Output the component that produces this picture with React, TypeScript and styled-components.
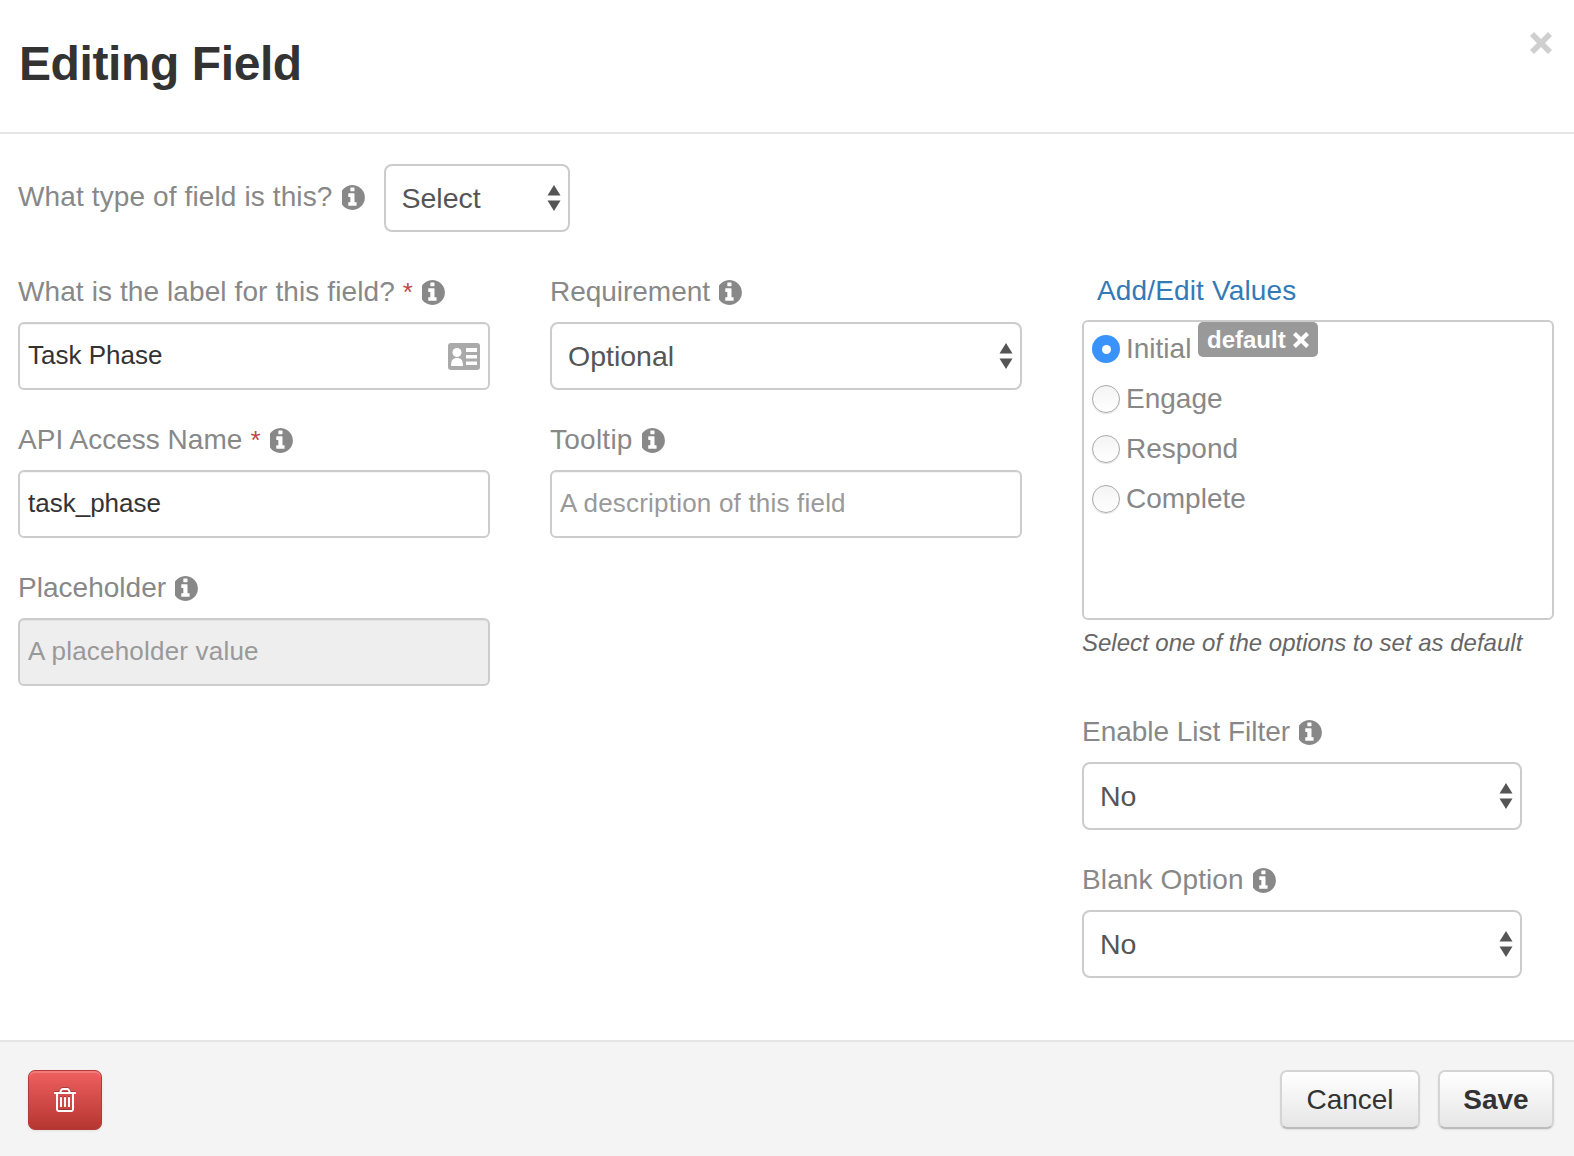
import React from "react";
import styled, { createGlobalStyle } from "styled-components";

const Global = createGlobalStyle`
  html, body { margin: 0; padding: 0; background: #fff; }
  body { font-family: "Liberation Sans", Arial, sans-serif; }
  * { box-sizing: border-box; }
`;

const Modal = styled.div`
  width: 1574px;
  height: 1156px;
  display: flex;
  flex-direction: column;
  background: #fff;
`;
const Header = styled.header`
  height: 134px;
  flex: none;
  display: flex;
  justify-content: space-between;
  padding: 35px 22px 0 19px;
  border-bottom: 2px solid #e5e5e5;
`;
const Title = styled.h1`
  margin: 0;
  font-size: 48px;
  line-height: 58px;
  letter-spacing: -0.4px;
  font-weight: 700;
  color: #333;
`;
const Close = styled.button`
  border: 0;
  background: none;
  padding: 0;
  width: 22px;
  height: 22px;
  margin-top: -3px;
  display: block;
`;
const Body = styled.main`
  flex: 1;
  display: flex;
  flex-direction: column;
  padding: 30px 20px 0 18px;
`;
const TypeRow = styled.div`
  display: flex;
  align-items: center;
  gap: 17px;
  height: 68px;
`;
const Columns = styled.div`
  display: grid;
  grid-template-columns: 472px 472px 472px;
  column-gap: 60px;
  margin-top: 45px;
`;
const Column = styled.div`
  display: flex;
  flex-direction: column;
  gap: 35px;
`;
const Group = styled.div`
  display: flex;
  flex-direction: column;
  gap: 15px;
`;
const Label = styled.label<{ $tracking?: number }>`
  display: flex;
  align-items: center;
  height: 30px;
  font-size: 28px;
  line-height: 30px;
  letter-spacing: ${(p) => p.$tracking ?? -0.03}px;
  color: #888;
  white-space: nowrap;
`;
const TypeLabel = styled(Label)`
  margin-bottom: 2px;
`;
const Required = styled.span`
  color: #b94a48;
  margin-left: 8px;
  font-size: 26px;
`;
const Info = styled.svg`
  width: 25px;
  height: 25px;
  margin-left: 9px;
  fill: #888;
  flex: none;
`;
const InputWrap = styled.div`
  position: relative;
  width: 100%;
`;
const TextInput = styled.input<{ $muted?: boolean }>`
  display: block;
  width: 100%;
  height: 68px;
  padding: 0 8px 2px;
  border: 2px solid #ccc;
  border-radius: 6px;
  font: 26px "Liberation Sans", Arial, sans-serif;
  color: #333;
  background: ${(p) => (p.$muted ? "#eee" : "#fff")};
  box-shadow: inset 0 1px 1px rgba(0, 0, 0, 0.05);
  outline: none;
  &::placeholder { color: #999; opacity: 1; letter-spacing: 0.2px; }
`;
const CardIcon = styled.svg`
  position: absolute;
  right: 10px;
  top: 21px;
  width: 32px;
  height: 27px;
`;
const SelectWrap = styled.div<{ $width?: number }>`
  position: relative;
  width: ${(p) => (p.$width ? `${p.$width}px` : "100%")};
  flex: none;
`;
const NativeSelect = styled.select`
  display: block;
  width: 100%;
  height: 68px;
  padding: 0 16px;
  appearance: none;
  border: 2px solid #ccc;
  border-radius: 8px;
  background: #fff;
  font: 28.5px "Liberation Sans", Arial, sans-serif;
  color: #555;
  outline: none;
`;
const Arrows = styled.svg`
  position: absolute;
  right: 9px;
  top: 20px;
  width: 14px;
  height: 28px;
  fill: #555;
  pointer-events: none;
`;
const ValuesLink = styled.a`
  display: block;
  height: 43px;
  margin-left: 15px;
  font-size: 28px;
  line-height: 28px;
  letter-spacing: 0.15px;
  color: #337ab7;
  text-decoration: none;
`;
const ValuesBox = styled.div`
  height: 300px;
  border: 2px solid #ccc;
  border-radius: 6px;
  padding: 2px 8px 0;
  display: flex;
  flex-direction: column;
  align-items: flex-start;
`;
const ValueRow = styled.div`
  display: flex;
  align-items: center;
  height: 50px;
  gap: 6px;
  font-size: 28px;
  color: #888;
  position: relative;
`;
const Radio = styled.span<{ $on?: boolean }>`
  width: 28px;
  height: 28px;
  border-radius: 50%;
  flex: none;
  display: flex;
  align-items: center;
  justify-content: center;
  background: ${(p) => (p.$on ? "#3a93fb" : "linear-gradient(#f4f4f4, #fff)")};
  border: ${(p) => (p.$on ? "0" : "1px solid #aaa")};
  box-shadow: ${(p) => (p.$on ? "none" : "0 1px 1px rgba(0,0,0,0.12)")};
  &::after {
    content: "";
    display: ${(p) => (p.$on ? "block" : "none")};
    width: 9px;
    height: 9px;
    border-radius: 50%;
    background: #fff;
  }
`;
const DefaultBadge = styled.span`
  position: absolute;
  left: 106px;
  top: -2px;
  height: 35px;
  width: 120px;
  padding: 0 9px;
  display: flex;
  align-items: center;
  gap: 7px;
  border-radius: 5px;
  background: #999;
  color: #fff;
  font-size: 24px;
  font-weight: 700;
`;
const BadgeX = styled.svg`
  width: 16px;
  height: 16px;
  fill: #fff;
  flex: none;
`;
const Hint = styled.p`
  margin: 9px 0 0;
  font-size: 24px;
  line-height: 28px;
  font-style: italic;
  color: #666;
  white-space: nowrap;
`;
const RightGroups = styled.div`
  width: 440px;
  margin-top: 60px;
  display: flex;
  flex-direction: column;
  gap: 35px;
`;
const ValuesBlock = styled.div`
  display: flex;
  flex-direction: column;
`;
const RightColumn = styled.div`
  display: flex;
  flex-direction: column;
`;
const Footer = styled.footer`
  height: 116px;
  flex: none;
  display: flex;
  justify-content: space-between;
  padding: 28px 20px 0 28px;
  background: #f4f4f4;
  border-top: 2px solid #e5e5e5;
`;
const DangerButton = styled.button`
  width: 74px;
  height: 60px;
  padding: 0;
  border: 1px solid #b33a36;
  border-radius: 7px;
  background: linear-gradient(#ef6060, #b53630);
  box-shadow: inset 0 2px 0 rgba(255, 255, 255, 0.18), 0 1px 3px rgba(0, 0, 0, 0.08);
  display: flex;
  align-items: center;
  justify-content: center;
`;
const TrashIcon = styled.svg`
  width: 24px;
  height: 24px;
  fill: #fff;
  filter: drop-shadow(0 -1px 0 rgba(0, 0, 0, 0.25));
`;
const Actions = styled.div`
  display: flex;
  gap: 18px;
`;
const Button = styled.button<{ $width: number; $bold?: boolean }>`
  width: ${(p) => p.$width}px;
  height: 59px;
  padding: 0;
  border: 2px solid #d4d4d4;
  border-bottom-color: #bbb;
  border-radius: 7px;
  background: linear-gradient(#fff, #e6e6e6);
  font: ${(p) => (p.$bold ? 700 : 400)} 28px "Liberation Sans", Arial, sans-serif;
  color: #333;
  box-shadow: 0 1px 2px rgba(0, 0, 0, 0.08);
`;

const InfoIcon = () => (
  <Info viewBox="128 128 1536 1536" aria-hidden="true">
    <path d="M1024 1376v-160q0-14-9-23t-23-9h-96v-512q0-14-9-23t-23-9h-320q-14 0-23 9t-9 23v160q0 14 9 23t23 9h96v320h-96q-14 0-23 9t-9 23v160q0 14 9 23t23 9h448q14 0 23-9t9-23zm-128-896v-160q0-14-9-23t-23-9h-192q-14 0-23 9t-9 23v160q0 14 9 23t23 9h192q14 0 23-9t9-23zm640 416q0 209-103 385.5t-279.5 279.5-385.5 103-385.5-103-279.5-279.5-103-385.5 103-385.5 279.5-279.5 385.5-103 385.5 103 279.5 279.5 103 385.5z" />
  </Info>
);

const Select = ({ value, width }: { value: string; width?: number }) => (
  <SelectWrap $width={width}>
    <NativeSelect defaultValue={value}>
      <option>{value}</option>
    </NativeSelect>
    <Arrows viewBox="0 0 14 28" aria-hidden="true">
      <path d="M7 1l6.5 10.5H.5zM7 27L.5 16.5h13z" />
    </Arrows>
  </SelectWrap>
);

const crossPath = "M4 0l7 7 7-7 4 4-7 7 7 7-4 4-7-7-7 7-4-4 7-7-7-7z";

export default function App() {
  return (
    <Modal>
      <Global />
      <Header>
        <Title>Editing Field</Title>
        <Close aria-label="Close">
          <svg viewBox="0 0 22 22" width="22" height="22" aria-hidden="true">
            <path d={crossPath} fill="#cfcfcf" />
          </svg>
        </Close>
      </Header>
      <Body>
        <TypeRow>
          <TypeLabel $tracking={0.12}>
            What type of field is this?
            <InfoIcon />
          </TypeLabel>
          <Select value="Select" width={186} />
        </TypeRow>
        <Columns>
          <Column>
            <Group>
              <Label $tracking={0.1}>
                What is the label for this field?<Required>*</Required>
                <InfoIcon />
              </Label>
              <InputWrap>
                <TextInput defaultValue="Task Phase" />
                <CardIcon viewBox="0 0 32 27" aria-hidden="true">
                  <rect width="32" height="27" rx="3" fill="#aaa" />
                  <circle cx="9" cy="9.5" r="4.5" fill="#fff" />
                  <path d="M3 23c0-6 2-8 6-8s6 2 6 8z" fill="#fff" />
                  <path d="M18 5h11v4H18zM18 12h11v3.5H18zM18 18.500h11V22H18z" fill="#fff" />
                </CardIcon>
              </InputWrap>
            </Group>
            <Group>
              <Label $tracking={0.02}>
                API Access Name<Required>*</Required>
                <InfoIcon />
              </Label>
              <TextInput defaultValue="task_phase" />
            </Group>
            <Group>
              <Label $tracking={0.02}>
                Placeholder
                <InfoIcon />
              </Label>
              <TextInput $muted placeholder="A placeholder value" />
            </Group>
          </Column>
          <Column>
            <Group>
              <Label>
                Requirement
                <InfoIcon />
              </Label>
              <Select value="Optional" />
            </Group>
            <Group>
              <Label $tracking={0.25}>
                Tooltip
                <InfoIcon />
              </Label>
              <TextInput placeholder="A description of this field" />
            </Group>
          </Column>
          <RightColumn>
            <ValuesBlock>
              <ValuesLink>Add/Edit Values</ValuesLink>
              <ValuesBox>
                <ValueRow>
                  <Radio $on />
                  Initial
                  <DefaultBadge>
                    default
                    <BadgeX viewBox="0 0 22 22" aria-hidden="true">
                      <path d={crossPath} />
                    </BadgeX>
                  </DefaultBadge>
                </ValueRow>
                <ValueRow>
                  <Radio />
                  Engage
                </ValueRow>
                <ValueRow>
                  <Radio />
                  Respond
                </ValueRow>
                <ValueRow>
                  <Radio />
                  Complete
                </ValueRow>
              </ValuesBox>
              <Hint>Select one of the options to set as default</Hint>
            </ValuesBlock>
            <RightGroups>
              <Group>
                <Label>
                  Enable List Filter
                  <InfoIcon />
                </Label>
                <Select value="No" />
              </Group>
              <Group>
                <Label $tracking={0.12}>
                  Blank Option
                  <InfoIcon />
                </Label>
                <Select value="No" />
              </Group>
            </RightGroups>
          </RightColumn>
        </Columns>
      </Body>
      <Footer>
        <DangerButton aria-label="Delete">
          <TrashIcon viewBox="128 128 1536 1536" aria-hidden="true">
            <path d="M704 736v576q0 14-9 23t-23 9h-64q-14 0-23-9t-9-23v-576q0-14 9-23t23-9h64q14 0 23 9t9 23zm256 0v576q0 14-9 23t-23 9h-64q-14 0-23-9t-9-23v-576q0-14 9-23t23-9h64q14 0 23 9t9 23zm256 0v576q0 14-9 23t-23 9h-64q-14 0-23-9t-9-23v-576q0-14 9-23t23-9h64q14 0 23 9t9 23zm128 724v-948h-896v948q0 22 7 40.5t14.5 27 10.5 8.5h832q3 0 10.5-8.5t14.5-27 7-40.5zm-672-1076h448l-48-117q-7-9-17-11h-317q-10 2-17 11zm928 32v64q0 14-9 23t-23 9h-96v948q0 83-47 143.5t-113 60.5h-832q-66 0-113-58.5t-47-141.5v-952h-96q-14 0-23-9t-9-23v-64q0-14 9-23t23-9h309l70-167q15-37 54-63t79-26h320q40 0 79 26t54 63l70 167h309q14 0 23 9t9 23z" />
          </TrashIcon>
        </DangerButton>
        <Actions>
          <Button $width={140}>Cancel</Button>
          <Button $width={116} $bold>
            Save
          </Button>
        </Actions>
      </Footer>
    </Modal>
  );
}
